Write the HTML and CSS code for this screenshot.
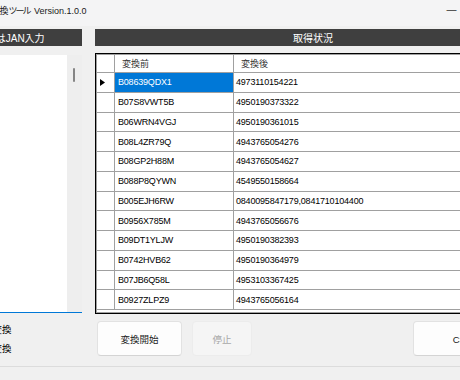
FILE: index.html
```html
<!DOCTYPE html>
<html lang="ja">
<head>
    <meta charset="UTF-8">
    <title>ASIN/JAN変換ツール Version.1.0.0</title>
    <link rel="stylesheet" href="styles.css">
</head>
<body>
    <div class="window">
        <div class="titlebar">
            <span class="title">ASIN/JAN変換<span class="kana">ツール</span> Version.1.0.0</span>
            <div class="controls">
                <span>&#8212;</span>
                <span>&#9744;</span>
                <span>&#10005;</span>
            </div>
        </div>

        <div class="content">
            <!-- left: input -->
            <div class="panel">
                <div class="bar left-bar">ASINまたはJAN入力</div>
                <div class="textbox">
                    <div class="text-area"></div>
                    <div class="scrollbar"><div class="thumb"></div></div>
                </div>
                <div class="radios">
                    <label class="radio"><span class="dot checked"></span>ASIN→JAN変換</label>
                    <label class="radio"><span class="dot"></span>JAN→ASIN変換</label>
                </div>
            </div>

            <!-- right: result grid -->
            <div class="panel">
                <div class="bar">取得状況</div>
                <div class="grid">
                    <div class="grid-inner">
                        <div class="row head">
                            <div class="cell rh"></div>
                            <div class="cell c1">変換前</div>
                            <div class="cell c2">変換後</div>
                        </div>
                        <div class="row">
                            <div class="cell rh"><svg width="5" height="7" viewBox="0 0 5 7"><path d="M0 0L5 3.5L0 7Z" fill="#000"/></svg></div>
                            <div class="cell c1 selected">B08639QDX1</div>
                            <div class="cell c2">4973110154221</div>
                        </div>
                        <div class="row"><div class="cell rh"></div><div class="cell c1">B07S8VWT5B</div><div class="cell c2">4950190373322</div></div>
                        <div class="row"><div class="cell rh"></div><div class="cell c1">B06WRN4VGJ</div><div class="cell c2">4950190361015</div></div>
                        <div class="row"><div class="cell rh"></div><div class="cell c1">B08L4ZR79Q</div><div class="cell c2">4943765054276</div></div>
                        <div class="row"><div class="cell rh"></div><div class="cell c1">B08GP2H88M</div><div class="cell c2">4943765054627</div></div>
                        <div class="row"><div class="cell rh"></div><div class="cell c1">B088P8QYWN</div><div class="cell c2">4549550158664</div></div>
                        <div class="row"><div class="cell rh"></div><div class="cell c1">B005EJH6RW</div><div class="cell c2">0840095847179,0841710104400</div></div>
                        <div class="row"><div class="cell rh"></div><div class="cell c1">B0956X785M</div><div class="cell c2">4943765056676</div></div>
                        <div class="row"><div class="cell rh"></div><div class="cell c1">B09DT1YLJW</div><div class="cell c2">4950190382393</div></div>
                        <div class="row"><div class="cell rh"></div><div class="cell c1">B0742HVB62</div><div class="cell c2">4950190364979</div></div>
                        <div class="row"><div class="cell rh"></div><div class="cell c1">B07JB6Q58L</div><div class="cell c2">4953103367425</div></div>
                        <div class="row"><div class="cell rh"></div><div class="cell c1">B0927ZLPZ9</div><div class="cell c2">4943765056164</div></div>
                    </div>
                </div>
                <div class="buttons">
                    <button class="btn start">変換開始</button>
                    <button class="btn stop" disabled>停止</button>
                    <button class="btn csv">CSV出力</button>
                </div>
            </div>
        </div>

        <div class="status"></div>
    </div>
</body>
</html>
```

FILE: styles.css
```css
html, body {
    margin: 0;
    height: 100%;
    overflow: hidden;
    background: #f0f0f0;
}
body {
    font-family: "Liberation Sans", "Noto Sans CJK JP", sans-serif;
    font-size: 9.5px;
    color: #000;
}
.window {
    margin-left: -121px;
    width: 660px;
}
.titlebar {
    height: 26px;
    background: #f4f4f5;
    display: flex;
    align-items: flex-start;
    padding-top: 4px;
    box-sizing: border-box;
}
.title {
    padding-left: 71px;
    font-size: 9px;
    color: #1a1a1a;
}
.kana {
    letter-spacing: -2px;
    margin-right: 2px;
}
.controls {
    margin-left: auto;
    display: flex;
}
.controls span {
    width: 35px;
    text-align: center;
    font-size: 10px;
    color: #333;
}
.controls span + span {
    visibility: hidden;
}
.content {
    display: grid;
    grid-template-columns: 195px 436px;
    column-gap: 13px;
    padding: 3px 8px 0;
}
.panel {
    display: flex;
    flex-direction: column;
}
.bar {
    height: 17px;
    background: #3f3f3f;
    color: #fff;
    font-size: 10px;
    display: flex;
    align-items: center;
    justify-content: center;
}
.left-bar {
    padding-left: 28px;
}
.textbox {
    margin-top: 9px;
    height: 258px;
    box-sizing: border-box;
    border-bottom: 1px solid #0078d7;
    display: flex;
}
.text-area {
    flex: 1;
    background: #fff;
}
.scrollbar {
    width: 15px;
    background: #eeeeee;
    position: relative;
}
.thumb {
    position: absolute;
    left: 6px;
    top: 13px;
    width: 2px;
    height: 14px;
    background: #858585;
    border-radius: 1px;
}
.radios {
    margin-top: 6px;
    padding-left: 42px;
}
.radio {
    height: 19px;
    display: flex;
    align-items: center;
    gap: 3px;
}
.dot {
    width: 11px;
    height: 11px;
    border: 1px solid #333;
    border-radius: 50%;
    box-sizing: border-box;
}
.dot.checked {
    background: radial-gradient(#0078d7 0 2.5px, #fff 3px);
    border-color: #0078d7;
}
.grid {
    margin-top: 7px;
    height: 261px;
    box-sizing: border-box;
    border: 1px solid #000;
    background: #fff;
    display: flex;
}
.grid-inner {
    flex: 1;
    border: 1px solid #a0a0a0;
    border-right: none;
}
.row {
    display: grid;
    grid-template-columns: 18px 119px 1fr;
    height: 19.75px;
    box-sizing: border-box;
    border-bottom: 1px solid #a0a0a0;
}
.row.head {
    height: 18px;
}
.cell {
    display: flex;
    align-items: center;
    white-space: nowrap;
    overflow: hidden;
    font-size: 9px;
    letter-spacing: -0.2px;
}
.rh {
    border-right: 1px solid #a0a0a0;
    padding-left: 3px;
}
.c1 {
    border-right: 1px solid #a0a0a0;
    padding-left: 3px;
}
.c2 {
    padding-left: 2px;
}
.head .c1,
.head .c2 {
    padding-left: 7px;
    color: #333;
    letter-spacing: 0;
}
.selected {
    background: #0078d7;
    color: #fff;
}
.buttons {
    margin-top: 7px;
    display: flex;
    gap: 10px;
    padding-left: 2px;
}
.btn {
    height: 35px;
    font-family: inherit;
    font-size: 9.5px;
    background: #fdfdfd;
    border: 1px solid #e2e2e2;
    border-bottom-color: #d4d4d4;
    border-radius: 4px;
    color: #1a1a1a;
    padding: 0;
}
.start {
    width: 85px;
}
.stop {
    width: 60px;
    background: #f5f5f5;
    border-color: #ececec;
    color: #a8a8a8;
}
.csv {
    width: 118px;
    margin-left: auto;
}
.status {
    margin-top: 9px;
    border-top: 1px solid #dcdcdc;
}
```
